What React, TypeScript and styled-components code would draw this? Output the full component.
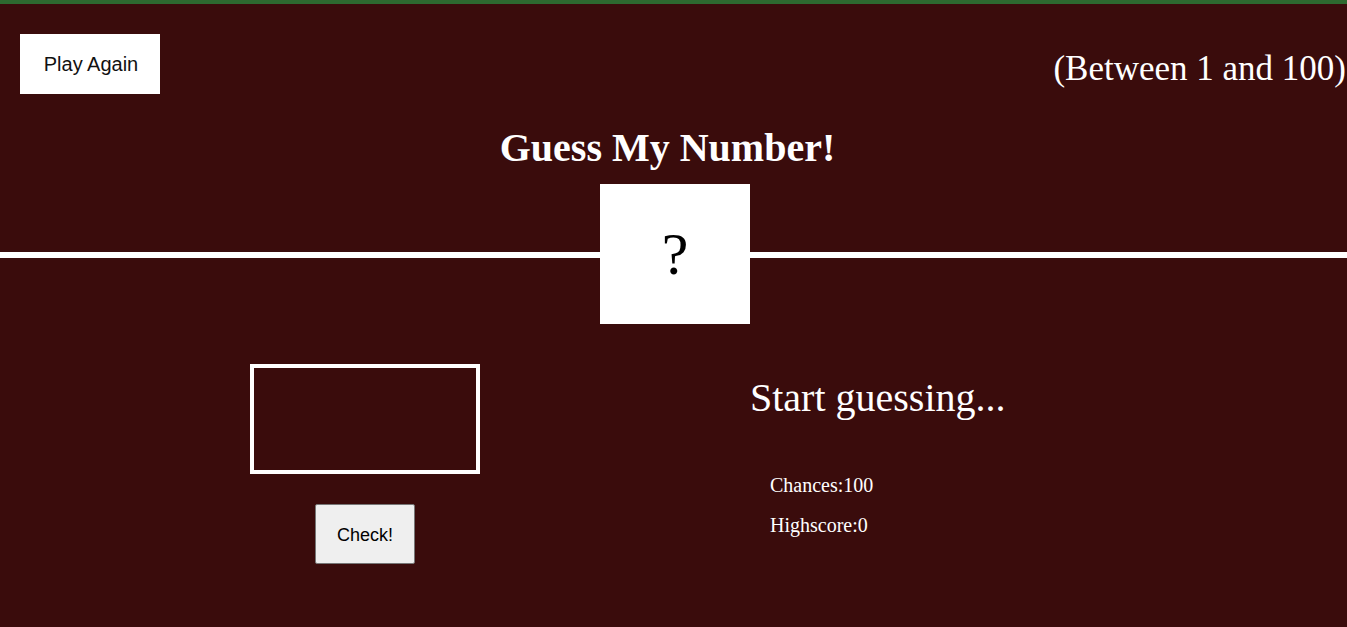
import React from "react";
import styled, { createGlobalStyle } from "styled-components";

const GlobalStyle = createGlobalStyle`
  html, body {
    margin: 0;
    padding: 0;
  }
  body {
    background: #3a0c0c;
    border-top: 4px solid #2d6a30;
    font-family: "Liberation Serif", "Times New Roman", serif;
    color: #ffffff;
    overflow: hidden;
  }
  * { box-sizing: border-box; }
`;

const Page = styled.div`
  display: flex;
  flex-direction: column;
  width: 100%;
`;

const TopBar = styled.header`
  display: flex;
  justify-content: space-between;
  align-items: flex-start;
  padding: 30px 1px 0 20px;
`;

const PlayAgainButton = styled.button`
  width: 140px;
  height: 60px;
  background: #ffffff;
  border: none;
  color: #111111;
  font-family: "Liberation Sans", Arial, sans-serif;
  font-size: 20px;
  cursor: pointer;
  padding: 0 0 0 2px;
`;

const RangeText = styled.p`
  margin: 15px 0 0 0;
  font-size: 35px;
  line-height: 40px;
  color: #ffffff;
`;

const Title = styled.h1`
  margin: 31px 0 0 0;
  padding-right: 12px;
  font-size: 40px;
  line-height: 46px;
  font-weight: bold;
  text-align: center;
  color: #ffffff;
`;

const DividerRow = styled.div`
  display: flex;
  align-items: center;
  margin-top: 13px;
`;

const Line = styled.div<{ $basis?: number }>`
  flex: 1 1 ${(p) => p.$basis ?? 0}px;
  height: 6px;
  margin-top: 2px;
  background: #ffffff;
`;

const SecretBox = styled.div`
  width: 150px;
  height: 140px;
  flex: none;
  background: #ffffff;
  color: #000000;
  display: flex;
  align-items: center;
  justify-content: center;
  font-size: 60px;
`;

const Main = styled.main`
  display: flex;
  align-items: flex-start;
  margin-top: 40px;
`;

const LeftColumn = styled.section`
  width: 730px;
  display: flex;
  flex-direction: column;
  align-items: center;
  gap: 30px;
`;

const GuessInput = styled.input`
  width: 230px;
  height: 110px;
  border: 4px solid #ffffff;
  background: transparent;
  color: #ffffff;
  font-family: "Liberation Serif", serif;
  font-size: 50px;
  text-align: center;
  outline: none;
`;

const CheckButton = styled.button`
  width: 100px;
  height: 60px;
  background: #efefef;
  border: 1px solid #767676;
  border-radius: 2px;
  color: #000000;
  font-family: "Liberation Sans", Arial, sans-serif;
  font-size: 18px;
  padding: 2px 0 0 0;
  cursor: pointer;
`;

const RightColumn = styled.section`
  padding-left: 20px;
  display: flex;
  flex-direction: column;
`;

const Message = styled.p`
  margin: 11px 0 0 0;
  font-size: 40px;
  line-height: 46px;
  color: #ffffff;
`;

const Stats = styled.div`
  margin-top: 53px;
  padding-left: 20px;
  display: flex;
  flex-direction: column;
  gap: 17px;
`;

const Stat = styled.p`
  margin: 0;
  font-size: 20px;
  line-height: 23px;
  color: #ffffff;
`;

export default function App() {
  return (
    <>
      <GlobalStyle />
      <Page>
        <TopBar>
          <PlayAgainButton>Play Again</PlayAgainButton>
          <RangeText>(Between 1 and 100)</RangeText>
        </TopBar>
        <Title>Guess My Number!</Title>
        <DividerRow>
          <Line $basis={3} />
          <SecretBox>?</SecretBox>
          <Line />
        </DividerRow>
        <Main>
          <LeftColumn>
            <GuessInput type="text" />
            <CheckButton>Check!</CheckButton>
          </LeftColumn>
          <RightColumn>
            <Message>Start guessing...</Message>
            <Stats>
              <Stat>Chances:100</Stat>
              <Stat>Highscore:0</Stat>
            </Stats>
          </RightColumn>
        </Main>
      </Page>
    </>
  );
}
